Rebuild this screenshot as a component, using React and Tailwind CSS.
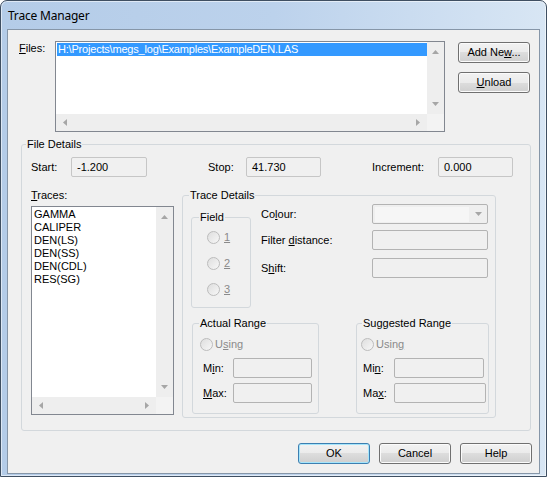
import React from 'react';

// small grey scroll arrows
function Tri({ dir }) {
  const vertical = dir === 'up' || dir === 'down';
  const pts = {
    up: '0,4 3.5,0 7,4',
    down: '0,0 7,0 3.5,4',
    left: '4,0 4,7 0,3.5',
    right: '0,0 0,7 4,3.5',
  }[dir];
  return (
    <svg width={vertical ? 7 : 4} height={vertical ? 4 : 7} viewBox={vertical ? '0 0 7 4' : '0 0 4 7'}>
      <polygon points={pts} fill="#a6a6a6" />
    </svg>
  );
}

function ListBox({ className, children }) {
  return (
    <div className={`flex flex-col border border-[#828790] bg-white ${className}`}>
      <div className="flex min-h-0 flex-1">
        <div className="min-w-0 flex-1 overflow-hidden">{children}</div>
        <div className="flex w-[17px] flex-col items-center justify-between bg-[#eeeeee] py-[8px]">
          <Tri dir="up" />
          <Tri dir="down" />
        </div>
      </div>
      <div className="flex h-[17px]">
        <div className="flex flex-1 items-center justify-between bg-[#eeeeee] px-[7px]">
          <Tri dir="left" />
          <Tri dir="right" />
        </div>
        <div className="w-[17px] bg-[#f3f3f3]" />
      </div>
    </div>
  );
}

function Button({ children, primary }) {
  return (
    <button
      className={`flex h-[21px] w-[72px] items-center justify-center rounded-[3px] border bg-[linear-gradient(#f2f2f2_0%,#ebebeb_50%,#dddddd_50%,#cfcfcf_100%)] text-[11px] leading-[13px] text-black ${
        primary
          ? 'border-[#3c7fb1] shadow-[inset_0_0_0_1px_#a6e5fb]'
          : 'border-[#707070] shadow-[inset_0_0_0_1px_#fbfbfb]'
      }`}
    >
      {children}
    </button>
  );
}

function Group({ title, legendClass, className, children }) {
  return (
    <fieldset className={`m-0 rounded-[3px] border border-[#d3d8dc] p-0 ${className}`}>
      <legend className={`px-[1px] text-[11px] leading-[14px] text-black ${legendClass}`}>{title}</legend>
      {children}
    </fieldset>
  );
}

function Radio() {
  return (
    <span className="block h-[13px] w-[13px] shrink-0 rounded-full border border-[#bcbcbc] bg-linear-to-br from-[#dedede] to-[#f7f7f7]" />
  );
}

function Field({ className, children }) {
  return (
    <div className={`flex h-[20px] items-center rounded-[2px] border border-[#c6c6c6] bg-[#f0f0f0] pl-[5px] ${className}`}>
      {children}
    </div>
  );
}

function Disabled({ className }) {
  return <div className={`h-[20px] rounded-[2px] border border-[#b3b3b3] bg-[#f0f0f0] ${className}`} />;
}

const traces = ['GAMMA', 'CALIPER', 'DEN(LS)', 'DEN(SS)', 'DEN(CDL)', 'RES(SG)'];

export default function App() {
  return (
    <div className="h-[477px] w-[547px] overflow-hidden rounded-t-[7px] border border-[#3f4f62] bg-linear-to-r from-[#b4cce8] via-[#bcd2ec] to-[#d8e6f4] font-['Liberation_Sans',Arial,sans-serif] text-[11px] leading-[13px] text-black shadow-[inset_0_0_0_1px_rgba(255,255,255,0.55)]">
      {/* Title bar */}
      <div className="flex h-[28px] items-center pl-[7px] font-['Noto_Sans',sans-serif] text-[12px] tracking-[-0.2px] text-black">
        Trace Manager
      </div>

      {/* Client area */}
      <div className="mx-[6px] h-[445px] border border-[#8696a8] bg-[#f0f0f0]">
        {/* Files row */}
        <div className="flex pt-[11px]">
          <div className="w-[47px] pl-[11px] pt-[1px]">
            <u>F</u>iles:
          </div>
          <ListBox className="h-[91px] w-[390px]">
            <div className="pl-[1px] pt-[1px]">
              <div className="h-[13px] whitespace-nowrap bg-[#3399ff] pl-[1px] tracking-[-0.2px] text-white">
                H:\Projects\megs_log\Examples\ExampleDEN.LAS
              </div>
            </div>
          </ListBox>
          <div className="ml-[13px] mt-[1px] flex flex-col gap-[9px]">
            <Button>
              <span>
                Add Ne<u>w</u>...
              </span>
            </Button>
            <Button>
              <span>
                <u>U</u>nload
              </span>
            </Button>
          </div>
        </div>

        {/* File Details */}
        <Group title="File Details" legendClass="ml-[4px]" className="ml-[13px] mt-[5px] h-[294px] w-[510px]">
          <div className="pl-[9px] pt-[6px]">
            <div className="flex h-[20px] items-center">
              <span className="w-[40px]">Start:</span>
              <Field className="w-[76px]">-1.200</Field>
              <span className="ml-[61px] w-[38px]">Stop:</span>
              <Field className="w-[75px]">41.730</Field>
              <span className="ml-[51px] w-[66px]">Increment:</span>
              <Field className="w-[75px]">0.000</Field>
            </div>

            <div className="mt-[11px] flex items-start">
              {/* Traces */}
              <div className="flex w-[143px] flex-col">
                <div className="h-[14px] leading-[14px]">
                  <u>T</u>races:
                </div>
                <ListBox className="mt-[4px] h-[209px] w-[143px]">
                  <div className="pl-[2px] pt-[1px]">
                    {traces.map((t) => (
                      <div key={t} className="h-[13px] whitespace-nowrap">
                        {t}
                      </div>
                    ))}
                  </div>
                </ListBox>
              </div>

              {/* Trace Details */}
              <Group title="Trace Details" legendClass="ml-[6px]" className="ml-[8px] h-[230px] w-[314px]">
                <div className="pl-[8px]">
                  <div className="flex items-start">
                    <Group title="Field" legendClass="ml-[7px]" className="mt-[8px] h-[98px] w-[60px]">
                      <div className="flex flex-col gap-[10px] pl-[15px] pt-[5px]">
                        {['1', '2', '3'].map((n) => (
                          <div key={n} className="flex h-[16px] items-center gap-[4px] text-[#8a8a8a]">
                            <Radio />
                            <u>{n}</u>
                          </div>
                        ))}
                      </div>
                    </Group>

                    <div className="ml-[10px] mt-[2px] flex flex-col">
                      <div className="flex h-[20px] items-center">
                        <span className="w-[111px]">
                          Co<u>l</u>our:
                        </span>
                        <div className="flex h-[20px] w-[116px] items-center rounded-[2px] border border-[#b3b3b3] bg-[#efefef] pl-[2px] pr-[5px]">
                          <div className="h-[15px] flex-1 bg-[#f6f6f6]" />
                          <div className="ml-[6px]">
                            <Tri dir="down" />
                          </div>
                        </div>
                      </div>
                      <div className="mt-[6px] flex h-[20px] items-center">
                        <span className="w-[111px]">
                          Filter <u>d</u>istance:
                        </span>
                        <Disabled className="w-[116px]" />
                      </div>
                      <div className="mt-[8px] flex h-[20px] items-center">
                        <span className="w-[111px]">
                          S<u>h</u>ift:
                        </span>
                        <Disabled className="w-[116px]" />
                      </div>
                    </div>
                  </div>

                  <div className="mt-[8px] flex">
                    <Group title="Actual Range" legendClass="ml-[6px]" className="ml-[1px] h-[98px] w-[127px]">
                      <div className="mt-[6px] flex h-[16px] items-center gap-[2px] pl-[7px] text-[#8a8a8a]">
                        <Radio />
                        <span>
                          U<u>s</u>ing
                        </span>
                      </div>
                      <div className="mt-[6px] flex h-[20px] items-center pl-[10px]">
                        <span className="w-[30px]">
                          M<u>i</u>n:
                        </span>
                        <Disabled className="w-[79px]" />
                      </div>
                      <div className="mt-[5px] flex h-[20px] items-center pl-[10px]">
                        <span className="w-[30px]">
                          <u>M</u>ax:
                        </span>
                        <Disabled className="w-[79px]" />
                      </div>
                    </Group>

                    <Group title="Suggested Range" legendClass="ml-[5px]" className="ml-[37px] h-[98px] w-[133px]">
                      <div className="mt-[6px] flex h-[16px] items-center gap-[2px] pl-[4px] text-[#8a8a8a]">
                        <Radio />
                        <span>
                          Usin<u>g</u>
                        </span>
                      </div>
                      <div className="mt-[6px] flex h-[20px] items-center pl-[6px]">
                        <span className="w-[31px]">
                          Mi<u>n</u>:
                        </span>
                        <Disabled className="w-[90px]" />
                      </div>
                      <div className="mt-[5px] flex h-[20px] items-center pl-[6px]">
                        <span className="w-[31px]">
                          Ma<u>x</u>:
                        </span>
                        <Disabled className="w-[92px]" />
                      </div>
                    </Group>
                  </div>
                </div>
              </Group>
            </div>
          </div>
        </Group>

        {/* Bottom buttons */}
        <div className="mt-[12px] flex justify-end gap-[9px] pr-[7px]">
          <Button primary>OK</Button>
          <Button>Cancel</Button>
          <Button>Help</Button>
        </div>
      </div>
    </div>
  );
}
